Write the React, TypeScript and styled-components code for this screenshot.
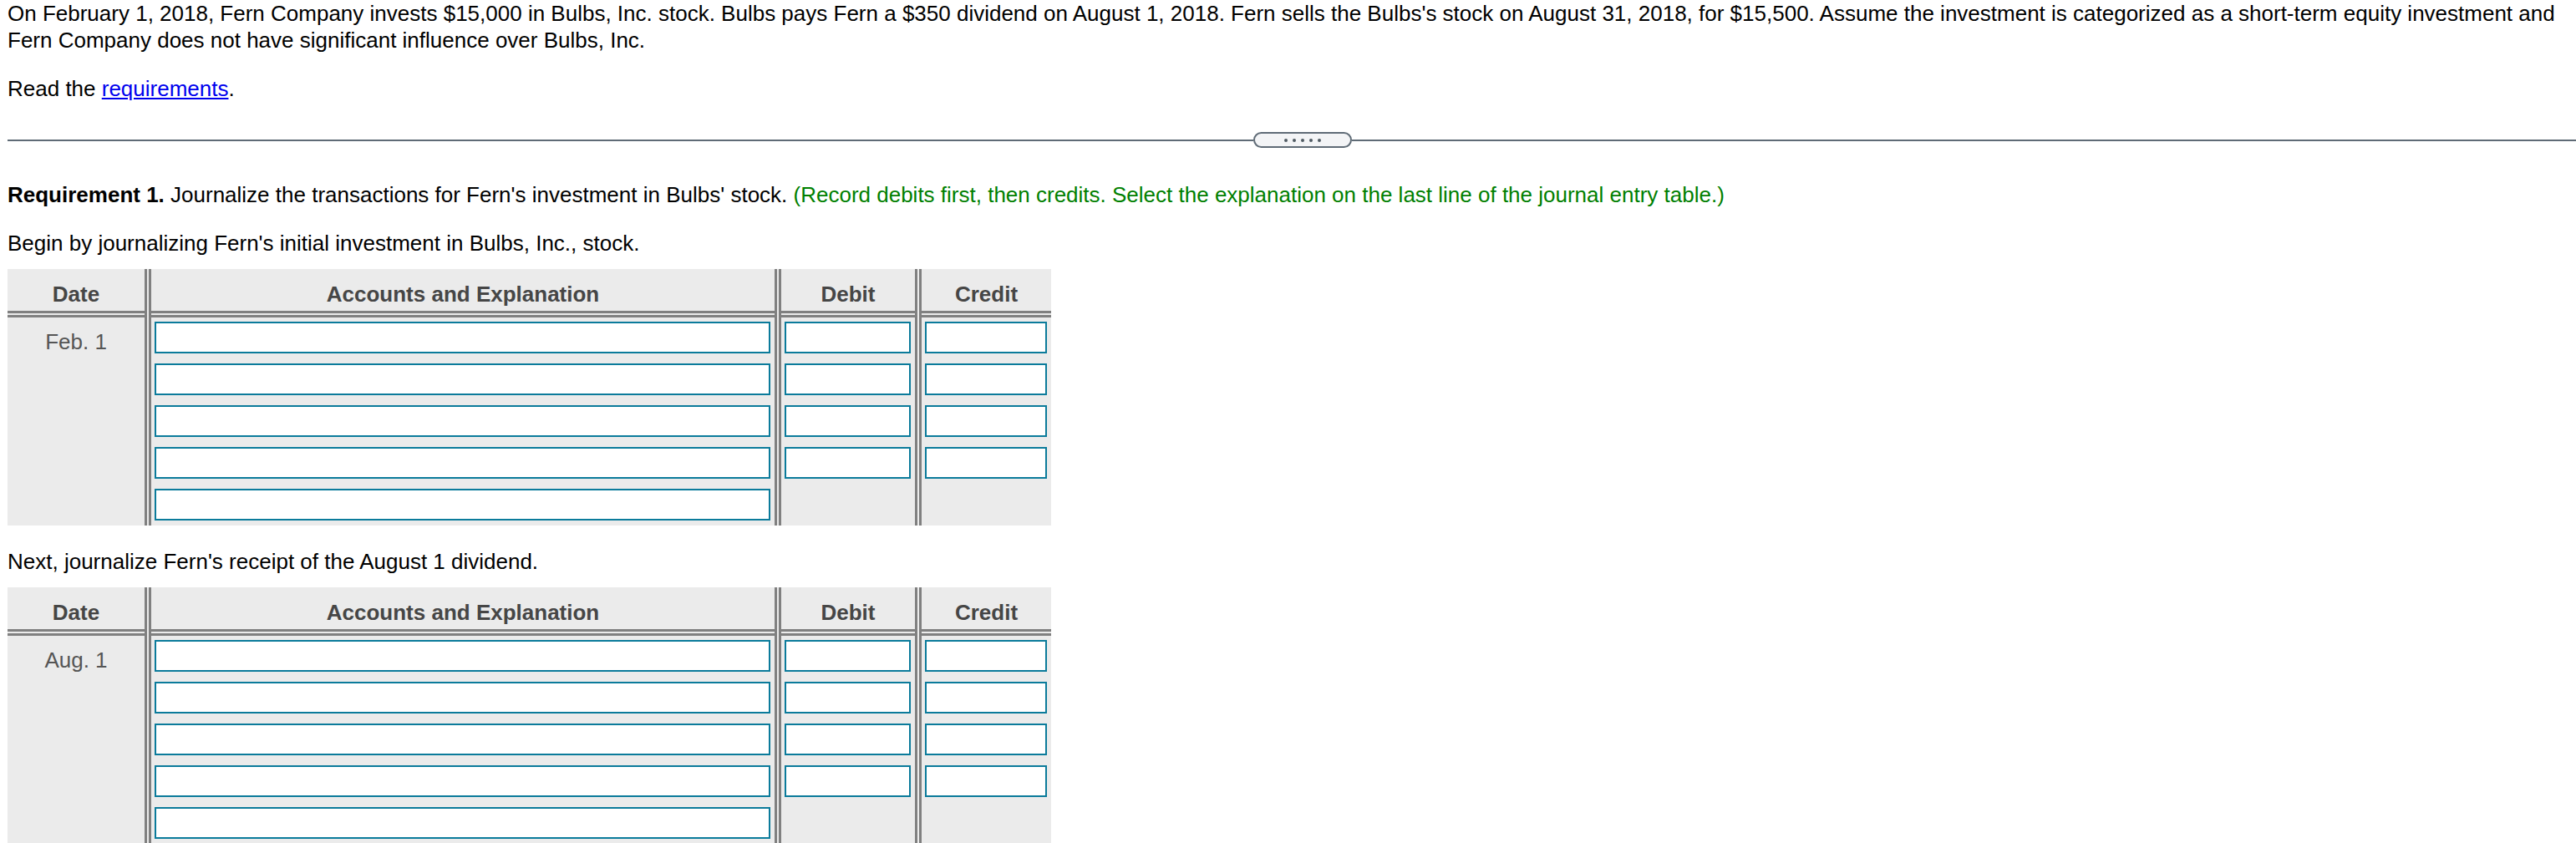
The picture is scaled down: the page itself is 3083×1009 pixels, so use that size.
import React from "react";
import styled, { createGlobalStyle } from "styled-components";

const GlobalStyle = createGlobalStyle`
  html, body {
    margin: 0;
    padding: 0;
    background: #ffffff;
  }
  body {
    font-family: "Liberation Sans", Arial, Helvetica, sans-serif;
    color: #000000;
  }
`;

const Page = styled.div`
  display: flex;
  flex-direction: column;
  align-items: flex-start;
  padding: 0 9px;
`;

const Paragraph = styled.p<{ $top?: number }>`
  margin: ${(p) => p.$top ?? 0}px 0 0;
  font-size: 26px;
  line-height: 32px;
  align-self: stretch;
`;

const Bold = styled.strong`
  font-weight: bold;
`;

const Hint = styled.span`
  color: #008000;
`;

const Link = styled.a`
  color: #0000ee;
  text-decoration: underline;
  cursor: pointer;
`;

const Divider = styled.div<{ $top: number }>`
  display: grid;
  grid-template-columns: 1491px 118px 1fr;
  align-items: center;
  align-self: stretch;
  margin: ${(p) => p.$top}px -9px 0 0;
  height: 19px;
`;

const Rule = styled.div`
  height: 2px;
  background: #5f6b76;
`;

const Pill = styled.div`
  box-sizing: border-box;
  height: 19px;
  border: 2px solid #5f6b76;
  border-radius: 10px;
  background: #f3f4f6;
  display: flex;
  align-items: center;
  justify-content: center;
  gap: 6px;
`;

const Dot = styled.span`
  width: 4px;
  height: 4px;
  border-radius: 50%;
  background: #505a63;
`;

const Journal = styled.div<{ $top: number }>`
  display: grid;
  grid-template-columns: 172px 754px 168px 155px;
  margin-top: ${(p) => p.$top}px;
  background: #ebebeb;
`;

const Column = styled.div<{ $last?: boolean }>`
  display: flex;
  flex-direction: column;
  border-right: ${(p) => (p.$last ? "none" : "8px double #808080")};
`;

const HeadCell = styled.div`
  box-sizing: border-box;
  height: 58px;
  padding-top: 11px;
  line-height: 39px;
  font-size: 26px;
  font-weight: bold;
  color: #464646;
  text-align: center;
  border-bottom: 8px double #808080;
`;

const BodyCell = styled.div`
  flex: 1;
  display: flex;
  flex-direction: column;
  gap: 12px;
  padding: 5px 5px 6px 4px;
`;

const DateText = styled.div`
  padding-top: 13px;
  font-size: 26px;
  line-height: 32px;
  color: #555555;
  text-align: center;
`;

const Entry = styled.input`
  box-sizing: border-box;
  display: block;
  width: 100%;
  height: 38px;
  margin: 0;
  padding: 0 6px;
  border: 2px solid #0b7b9b;
  border-radius: 0;
  background: #ffffff;
  font-family: inherit;
  font-size: 22px;
  outline: none;
`;

type JournalTableProps = { date: string; top: number };

const JournalTable: React.FC<JournalTableProps> = ({ date, top }) => (
  <Journal $top={top}>
    <Column>
      <HeadCell>Date</HeadCell>
      <DateText>{date}</DateText>
    </Column>
    <Column>
      <HeadCell>Accounts and Explanation</HeadCell>
      <BodyCell>
        {[0, 1, 2, 3, 4].map((i) => (
          <Entry key={i} aria-label={`Account ${i + 1}`} />
        ))}
      </BodyCell>
    </Column>
    <Column>
      <HeadCell>Debit</HeadCell>
      <BodyCell>
        {[0, 1, 2, 3].map((i) => (
          <Entry key={i} aria-label={`Debit ${i + 1}`} />
        ))}
      </BodyCell>
    </Column>
    <Column $last>
      <HeadCell>Credit</HeadCell>
      <BodyCell>
        {[0, 1, 2, 3].map((i) => (
          <Entry key={i} aria-label={`Credit ${i + 1}`} />
        ))}
      </BodyCell>
    </Column>
  </Journal>
);

export default function App() {
  return (
    <>
      <GlobalStyle />
      <Page>
        <Paragraph>
          On February 1, 2018, Fern Company invests $15,000 in Bulbs, Inc. stock. Bulbs pays Fern a $350
          dividend on August 1, 2018. Fern sells the Bulbs's stock on August 31, 2018, for $15,500. Assume the
          investment is categorized as a short-term equity investment and Fern Company does not have
          significant influence over Bulbs, Inc.
        </Paragraph>
        <Paragraph $top={26}>
          Read the <Link>requirements</Link>.
        </Paragraph>
        <Divider $top={36}>
          <Rule />
          <Pill>
            <Dot />
            <Dot />
            <Dot />
            <Dot />
            <Dot />
          </Pill>
          <Rule />
        </Divider>
        <Paragraph $top={40}>
          <Bold>Requirement 1.</Bold> Journalize the transactions for Fern's investment in Bulbs' stock.{" "}
          <Hint>
            (Record debits first, then credits. Select the explanation on the last line of the journal entry
            table.)
          </Hint>
        </Paragraph>
        <Paragraph $top={26}>Begin by journalizing Fern's initial investment in Bulbs, Inc., stock.</Paragraph>
        <JournalTable date="Feb. 1" top={15} />
        <Paragraph $top={27}>Next, journalize Fern's receipt of the August 1 dividend.</Paragraph>
        <JournalTable date="Aug. 1" top={15} />
      </Page>
    </>
  );
}
